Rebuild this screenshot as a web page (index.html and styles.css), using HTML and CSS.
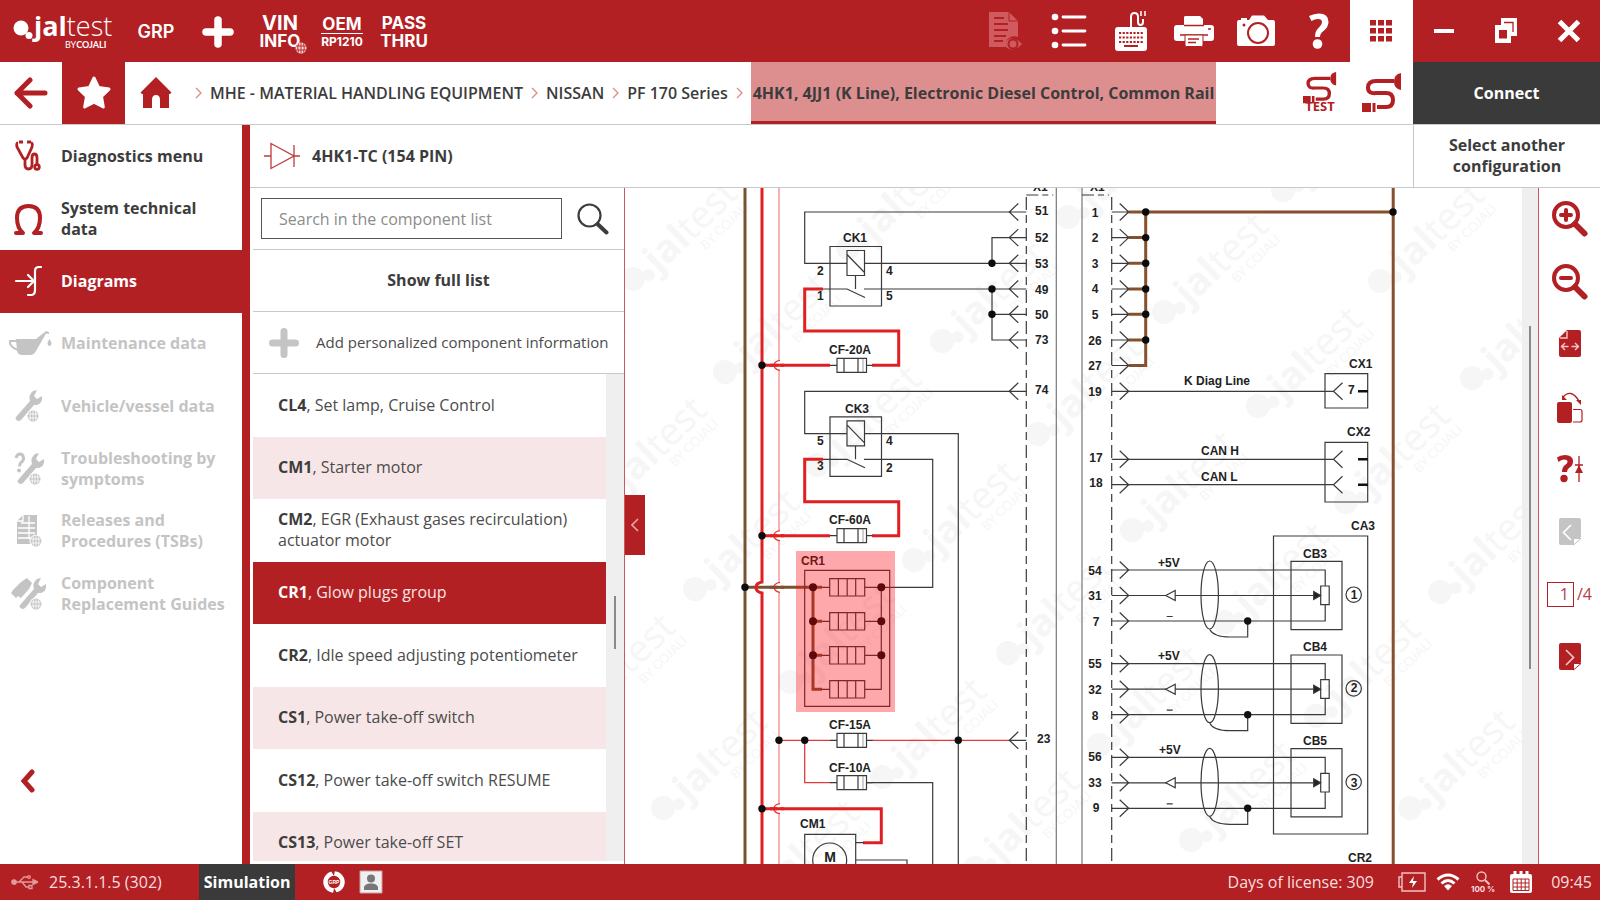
FILE: index.html
```html
<!DOCTYPE html>
<html lang="en">
<head>
<meta charset="utf-8">
<title>Jaltest - Diagrams</title>
<link rel="stylesheet" href="styles.css">
</head>
<body>
<div class="app">
  <header class="topbar">
    <svg class="logo" width="100" height="52" viewBox="12 4 100 52" role="img" aria-label="jaltest by Cojali">
      <circle cx="21" cy="27" r="7.5"/><circle cx="29" cy="34.500" r="3.500"/>
      <text x="34" y="35" class="logo-name"><tspan class="heavy">jal</tspan><tspan class="thin">test</tspan></text>
      <text x="65" y="47" class="logo-by">BY<tspan class="heavy">COJALI</tspan></text>
    </svg>
    <nav class="top-left">
      <button class="tb grp">GRP</button>
      <button class="tb" aria-label="Add"><svg width="32" height="32" viewBox="0 0 32 32"><path d="M16 4V28M4 16H28" stroke="#fff" stroke-width="7.500" stroke-linecap="round"/></svg></button>
      <button class="tb vin"><span>VIN</span><span class="small">INFO</span>
        <svg class="globe" width="12" height="12" viewBox="0 0 12 12"><circle cx="6" cy="6" r="5.500" fill="#f6d5d6"/><path d="M1 4h10M1 8h10M6 1v10M3.500 1.500q-1.500 4.500 0 9M8.500 1.500q1.500 4.500 0 9" stroke="#b22024" stroke-width=".9" fill="none"/></svg></button>
      <button class="tb oem"><span>OEM</span><span class="rp">RP1210</span></button>
      <button class="tb pass"><span>PASS</span><span>THRU</span></button>
    </nav>
    <nav class="top-right">
      <button class="tb dim" aria-label="View report"><svg width="36" height="42" viewBox="0 0 36 42"><path fill="#d05a5d" d="M1 2h20l9 9v16a9 8 0 0 0-12 10H1z"/><path d="M6 8h10M6 14h14M6 20h14M6 26h12M6 31h9" stroke="#b22024" stroke-width="1.800"/><path d="M21 2v9h9" stroke="#b22024" fill="none"/><path d="M15 34q9-11 19 0q-10 11-19 0z" fill="#d05a5d"/><circle cx="25" cy="34" r="4.500" fill="none" stroke="#b22024" stroke-width="2"/></svg></button>
      <button class="tb" aria-label="List"><svg width="36" height="36" viewBox="0 0 36 36"><g fill="#fff"><circle cx="4" cy="4" r="3.300"/><circle cx="4" cy="18" r="3.300"/><circle cx="4" cy="32" r="3.300"/></g><path d="M12 4h22M12 18h22M12 32h22" stroke="#fff" stroke-width="2.800" stroke-linecap="round"/></svg></button>
      <button class="tb" aria-label="Keyboard"><svg width="34" height="40" viewBox="0 0 34 40"><rect x="1" y="16" width="32" height="24" rx="3" fill="#fff"/><path d="M17 16V6q0-4 3.500-4T24 6v5q0 3 2.500 3t2.500-3V8" fill="none" stroke="#fff" stroke-width="2"/><path d="M27 0v5M31 0v5" stroke="#fff" stroke-width="1.500"/><path d="M5 22h24M5 26.500h24M5 31h24" stroke="#b22024" stroke-width="2" stroke-dasharray="2.200 1.400"/><path d="M10 35h14" stroke="#b22024" stroke-width="2"/></svg></button>
      <button class="tb" aria-label="Print"><svg width="42" height="32" viewBox="0 0 42 32"><path fill="#fff" d="M12 1h15l3 3v7H11V2z"/><rect x="1" y="10" width="40" height="16" rx="3" fill="#fff"/><path d="M11 10.500h20M7 20h28" stroke="#b22024" stroke-width="1.500"/><path fill="#fff" stroke="#b22024" d="M12 20h18v10q0 1.500-1.500 1.500h-15Q12 31.500 12 30z"/><path d="M15 24h11M15 27.500h8" stroke="#b22024" stroke-width="1.500"/><path d="M35 14h3" stroke="#b22024" stroke-width="1.500"/></svg></button>
      <button class="tb" aria-label="Camera"><svg width="40" height="32" viewBox="0 0 40 32"><path fill="#fff" d="M3 5h2V3h6v2h2l3-4.500h12L32 5h5q2 0 2 2v22q0 2-2 2H3q-2 0-2-2V7q0-2 2-2z"/><circle cx="22" cy="18" r="10" fill="none" stroke="#b22024" stroke-width="2"/><circle cx="8" cy="10" r="1.500" fill="#b22024"/></svg></button>
      <button class="tb" aria-label="Help"><svg width="24" height="38" viewBox="0 0 24 38"><path d="M2 4Q7 1.500 12 1.500q9.500 0 9.500 8.500 0 5-5 9-3.500 2.500-3.500 6H8q0-6 3.500-9Q15 12.500 15 10q0-3-4-3-3.500 0-6.500 2z" fill="#fff"/><circle cx="10.500" cy="32" r="4.800" fill="#fff"/></svg></button>
      <button class="tb active" aria-label="Applications"><svg width="22" height="22" viewBox="0 0 22 22" fill="#b22024"><path d="M0 0h6v5.500H0zM8 0h6v5.500H8zM16 0h6v5.500h-6zM0 8h6v5.500H0zM8 8h6v5.500H8zM16 8h6v5.500h-6zM0 16h6v5.500H0zM8 16h6v5.500H8zM16 16h6v5.500h-6z"/></svg></button>
      <button class="tb" aria-label="Minimize"><svg width="20" height="20" viewBox="0 0 20 20"><path d="M0 10h20" stroke="#fff" stroke-width="4"/></svg></button>
      <button class="tb" aria-label="Restore"><svg width="22" height="26" viewBox="0 0 22 26"><path d="M6 0h16v18H6z" fill="#fff"/><path d="M9 4.500h9V14" fill="none" stroke="#b22024" stroke-width="1.300"/><path d="M0 7h16v18H0z" fill="#fff"/><path d="M4 12h8v8.500H4z" fill="#b22024"/></svg></button>
      <button class="tb" aria-label="Close"><svg width="24" height="24" viewBox="0 0 24 24"><path d="M2.500 2.500l19 19M21.500 2.500l-19 19" stroke="#fff" stroke-width="5"/></svg></button>
    </nav>
  </header>

  <div class="navbar">
    <button class="nb" aria-label="Back"><svg width="34" height="32" viewBox="0 0 34 32"><path d="M16 3L3 16l13 13M3 16h28" fill="none" stroke="#b22024" stroke-width="5" stroke-linecap="round" stroke-linejoin="round"/></svg></button>
    <button class="nb star" aria-label="Favourites"><svg width="36" height="36" viewBox="0 0 36 36"><path d="M18 3l4.600 9.600 10.400 1.500-7.500 7.400 1.800 10.500-9.300-4.900L8.700 32l1.800-10.500L3 14.100l10.400-1.500z" fill="#fff" stroke="#fff" stroke-width="3" stroke-linejoin="round"/></svg></button>
    <button class="nb" aria-label="Home"><svg width="32" height="32" viewBox="0 0 32 32"><path d="M16 0l15.500 15.500-1.500 1.500h-1V31h-9v-8q0-5-4-5t-4 5v8H3V17H2L.5 15.500z" fill="#b22024"/></svg></button>
    <nav class="crumbs" aria-label="Breadcrumb">
      <svg class="sep" viewBox="0 0 7 12"><path d="M1 1l5 5-5 5"/></svg><a href="#mhe">MHE - MATERIAL HANDLING EQUIPMENT</a>
      <svg class="sep" viewBox="0 0 7 12"><path d="M1 1l5 5-5 5"/></svg><a href="#nissan">NISSAN</a>
      <svg class="sep" viewBox="0 0 7 12"><path d="M1 1l5 5-5 5"/></svg><a href="#pf170">PF 170 Series</a>
      <svg class="sep" viewBox="0 0 7 12"><path d="M1 1l5 5-5 5"/></svg><a href="#engine" class="current">4HK1, 4JJ1 (K Line), Electronic Diesel Control, Common Rail</a>
    </nav>
    <div class="nav-tools">
      <button class="nb test" aria-label="Cable test"><svg width="34" height="46" viewBox="0 -2 34 46"><use href="#cable" transform="scale(.85 .8)"/><text x="17" y="39" text-anchor="middle" class="test-label">TEST</text></svg></button>
      <button class="nb" aria-label="Cable"><svg width="40" height="40" viewBox="0 0 40 40">
        <defs><g id="cable"><path d="M32 8H14q-8 0-8 6.500T14 20h10q7 0 7 7t-7 7h-9" fill="none" stroke="#b22024" stroke-width="4"/><path d="M39 0v17q-7-1-7-8.500T39 0z" fill="#b22024"/><path d="M0 30h9v9H0zM10.500 30h3v9h-3z" fill="#b22024"/></g></defs><use href="#cable"/></svg></button>
    </div>
    <button class="connect">Connect</button>
  </div>

  <main class="main">
    <aside class="sidebar">
      <nav class="side-list">
        <a href="#diag" class="side"><svg class="si" viewBox="0 0 40 40"><g fill="none" stroke="#b22024" stroke-width="2.800"><path d="M10 7q-2 0-1 4l6 11q2 2 4 0l5-11q1-4-1-4M11 6h4M19 6h4"/><path d="M17 22v7q0 4 3.500 4t3.500-4v-7q0-4 2.500-4t2.500 4v7"/><circle cx="29" cy="31" r="2.300"/></g></svg><span>Diagnostics menu</span></a>
        <a href="#tech" class="side"><svg class="si" viewBox="0 0 40 40"><path d="M8 34h7q-6-5-6-15 0-12 11.500-12T32 19q0 10-6 15h7" fill="none" stroke="#b22024" stroke-width="4" stroke-linecap="round" stroke-linejoin="round"/></svg><span>System technical data</span></a>
        <a href="#diagrams" class="side on" aria-current="page"><svg class="si" viewBox="0 0 40 40"><path d="M8 20h18M20 14l6 6-6 6M33 6h-2q-4 0-4 4v19q0 5-4 5h-3" fill="none" stroke="#fff" stroke-width="2.200" stroke-linecap="round"/></svg><span>Diagrams</span></a>
        <a href="#maint" class="side off"><svg class="si wide" viewBox="0 0 44 40"><path d="M8 15h20l10-8 3 1v2l-3-.5L28 27q-2 4-6 4h-8q-4 0-5-4z" fill="#c4c4c4"/><path d="M9 17H2q-1 6 8 9" fill="none" stroke="#c4c4c4" stroke-width="2"/><path d="M41.500 15q4 6 0 7-4-1 0-7z" fill="#c4c4c4"/></svg><span>Maintenance data</span></a>
        <a href="#vehicle" class="side off"><svg class="si" viewBox="0 0 40 40"><use href="#wrench"/><use href="#net"/></svg><span>Vehicle/vessel data</span></a>
        <a href="#trouble" class="side off"><svg class="si" viewBox="0 0 40 40"><use href="#wrench" x="2"/><use href="#net" x="2"/><path d="M8 9q1-4 4-4t3.500 4q0 3-2.500 4.500-1.500 1-1.500 4" fill="none" stroke="#c4c4c4" stroke-width="3"/><circle cx="11" cy="21.500" r="1.900" fill="#c4c4c4"/></svg><span>Troubleshooting by symptoms</span></a>
        <a href="#releases" class="side off"><svg class="si" viewBox="0 0 40 40"><path d="M15 4h14v26q0 3-3 3H9V10z" fill="#c4c4c4"/><path d="M13 12h14M10 17h17M10 22h17M10 27h15M21 5v23M15 4v6H9" stroke="#fff" stroke-width="1.300" fill="none"/><use href="#net" x="3"/></svg><span>Releases and Procedures (TSBs)</span></a>
        <a href="#guides" class="side off"><svg class="si" viewBox="0 0 40 40"><use href="#wrench" x="4"/><use href="#net" x="3"/><path d="M13 8l6-4 5 5-3 6-8 9-3-2-2 2-5-5 2-3z" fill="#c4c4c4"/></svg><span>Component Replacement Guides</span></a>
      </nav>
      <button class="collapse" aria-label="Collapse menu"><svg width="16" height="24" viewBox="0 0 16 24"><path d="M12 3L4 12l8 9" fill="none" stroke="#b22024" stroke-width="5" stroke-linecap="round"/></svg></button>
    </aside>

    <section class="content">
      <div class="subbar">
        <svg width="36" height="28" viewBox="0 0 36 28" fill="none" stroke="#c0393c" stroke-width="1.300"><path d="M0 14h7M30 14h6M7 1.500v25L30 14zM30 3v22"/></svg>
        <h1>4HK1-TC (154 PIN)</h1>
        <button class="another">Select another configuration</button>
      </div>
      <div class="work">
        <div class="panel">
          <form class="search"><input type="text" placeholder="Search in the component list" aria-label="Search in the component list"><button type="button" aria-label="Search"><svg width="32" height="32" viewBox="0 0 32 32" fill="none" stroke="#3c3c3c"><circle cx="12.500" cy="12.500" r="11" stroke-width="2.200"/><path d="M20.500 21l9 8.500" stroke-width="4" stroke-linecap="round"/></svg></button></form>
          <button class="full">Show full list</button>
          <button class="add"><svg width="30" height="30" viewBox="0 0 30 30"><path d="M15 3.500v23M3.500 15h23" stroke="#c4c4c4" stroke-width="7" stroke-linecap="round"/></svg><span>Add personalized component information</span></button>
          <div class="list-wrap">
            <ul class="list">
              <li><span><b>CL4</b>, Set lamp, Cruise Control</span></li>
              <li><span><b>CM1</b>, Starter motor</span></li>
              <li><span><b>CM2</b>, EGR (Exhaust gases recirculation) actuator motor</span></li>
              <li class="sel"><span><b>CR1</b>, Glow plugs group</span></li>
              <li><span><b>CR2</b>, Idle speed adjusting potentiometer</span></li>
              <li><span><b>CS1</b>, Power take-off switch</span></li>
              <li><span><b>CS12</b>, Power take-off switch RESUME</span></li>
              <li><span><b>CS13</b>, Power take-off SET</span></li>
            </ul>
            <div class="track list-track"><i></i></div>
          </div>
        </div>
        <div class="canvas">
          <button class="handle" aria-label="Hide component list"><svg width="8" height="14" viewBox="0 0 8 14"><path d="M7 1L1 7l6 6" fill="none" stroke="#e8a5a7" stroke-width="1.600"/></svg></button>
          <svg class="diagram" width="897" height="676" viewBox="625 188 897 676">
            <defs>
              <g id="wrench"><path d="M8 31L22 15q-2-6 3-10l4-1-3 6 3 3 5-3q1 7-5 9l-3 0L13 34q-3 2-5-.5-1-1.500 0-2.500z" fill="#c4c4c4"/></g>
              <g id="net"><circle cx="25" cy="30" r="6.500" fill="#fff"/><circle cx="25" cy="30" r="5.500" fill="#c4c4c4"/><path d="M20 28h10M20 32h10M25 25v10M22.500 25.500q-1 4.500 0 9M27.500 25.500q1 4.500 0 9" stroke="#fff" stroke-width=".8" fill="none"/></g>
              <g id="wm" transform="rotate(-44)"><circle r="12"/><circle cx="14" cy="8" r="6"/><text x="22" y="14" class="wm-name"><tspan class="heavy">jal</tspan>test</text><text x="72" y="30" class="wm-by">BY COJALI</text></g>
              <g id="pinL"><path d="M0 0h17M9-8.500L0 0l9 8.500"/></g>
              <g id="pinR"><path d="M0 0h17M8-8.500L17 0l-9 8.500"/></g>
              <g id="relay"><path d="M0 0h51.500v59.500H0zM17 4h17.500v25H17zM17 8l17.500 18M25.500 29v13.500M-7 42.500H17l18 8.500"/></g>
              <g id="fuse"><path d="M-7 0h7M29.500 0h6"/><path d="M0-7h29.500V7H0zM7-7V7M21-7V7"/><path d="M26-7V7" opacity=".4"/></g>
              <g id="heater"><path d="M-8 0h8M35 0h17M0-8.700h35V8.700H0zM8.700-8.700V8.700M17.500-8.700V8.700M26-8.700V8.700"/></g>
              <g id="hop"><path d="M779-5v10" stroke="#fff" stroke-width="3"/><path d="M780-5q-6 1-6 5t6 5"/></g>
              <g id="sensor"><path d="M17 0h196.500v16M17 25.500h191M17 51h196.500V34.700M209 16h8.500v18.700H209zM179.300-8.700h51v68.300h-51z"/><path d="M202 21.500l7 4-7 4z" fill="#222"/><path d="M54 25.500l9.500-5v10z" fill="#fff"/><ellipse cx="98" cy="25" rx="8.700" ry="34"/><path d="M98 59.500q4 7.500 20 7.500h18V51M55 46.500h6"/><circle cx="242" cy="24.700" r="7.700"/><circle cx="136" cy="51" r="3.700" fill="#111" stroke="none"/><use href="#pinR"/><use href="#pinR" y="25.500"/><use href="#pinR" y="51"/></g>
            </defs>
            <g fill="#f6f6f6">
              <use href="#wm" transform="translate(633 279)"/><use href="#wm" transform="translate(848 248)"/><use href="#wm" transform="translate(1068 217)"/><use href="#wm" transform="translate(1283 190)"/>
              <use href="#wm" transform="translate(510 403)"/><use href="#wm" transform="translate(725 372)"/><use href="#wm" transform="translate(942 341)"/><use href="#wm" transform="translate(1164 312)"/><use href="#wm" transform="translate(1380 281)"/>
              <use href="#wm" transform="translate(602 496)"/><use href="#wm" transform="translate(817 465)"/><use href="#wm" transform="translate(1038 434)"/><use href="#wm" transform="translate(1258 406)"/><use href="#wm" transform="translate(1472 378)"/>
              <use href="#wm" transform="translate(695 589)"/><use href="#wm" transform="translate(914 560)"/><use href="#wm" transform="translate(1132 530)"/><use href="#wm" transform="translate(1346 502)"/>
              <use href="#wm" transform="translate(571 713)"/><use href="#wm" transform="translate(790 682)"/><use href="#wm" transform="translate(1008 653)"/><use href="#wm" transform="translate(1224 622)"/><use href="#wm" transform="translate(1440 592)"/>
              <use href="#wm" transform="translate(663 808)"/><use href="#wm" transform="translate(882 777)"/><use href="#wm" transform="translate(1099 745)"/><use href="#wm" transform="translate(1316 716)"/>
              <use href="#wm" transform="translate(755 899)"/><use href="#wm" transform="translate(975 868)"/><use href="#wm" transform="translate(1191 840)"/><use href="#wm" transform="translate(1410 808)"/>
            </g>
            <g class="brown">
              <path d="M745 188v676M745 587.300h77M813 587.300v102h9M813 621.300h9M813 655.300h9"/>
              <path class="br2" d="M1393.200 188v676M1128.500 212h264.700M1145.700 212v153.500h-17M1128.500 237.600h17M1128.500 263.300h17M1128.500 289h17M1128.500 314.300h17M1128.500 340h17"/>
            </g>
            <path class="pink" d="M779 188v676"/>
            <g class="red thinred"><path d="M779 740.300h51M872 740.300h138M804.700 740.300v42.400h26"/></g>
            <g class="red">
              <path d="M762 188v394q-6 1-6 5.500t6 5.500v271"/>
              <path d="M823 289h-18.300v42h94v34.300H872M762 365.300h68M823 459.300h-18.300v42.400h94v34H872M762 535.700h68M762 808.700h119.300v34H863"/>
            </g>
            <g class="red thinred"><use href="#hop" y="365.300"/><use href="#hop" y="535.700"/><use href="#hop" y="587.300"/><use href="#hop" y="808.700"/></g>
            <path class="red" d="M770 365.300h14M770 535.700h14M770 808.700h14"/>
            <path class="brown" d="M770 587.300h14"/>
            <g class="wire">
              <path d="M1056.300 188v676M1082 188v676" stroke="#777"/>
              <path d="M1026.300 197v667M1111.700 197v667" stroke-dasharray="13 5 8 5"/>
              <path d="M1026.300 195h27M1082 195h27" stroke-dasharray="12 4 6 4"/>
              <path d="M1010 212H804.700v51.300H847M864.500 263.300H1010M864 289h146M1010 237.600H992v25.700M992 289v51h18M992 314.300h18"/>
              <path d="M1010 391.300H804.700v42.300H847M864.500 433.600h93.800V864M864 459.300h68.700v128h-51.400M881.300 587.300v102M866 782.700h66.700V864M855.700 842.700h8M855.700 860H907v6"/>
              <path d="M804.700 570.300h85v136h-85zM804.700 834.300h51V870h-51z"/><circle cx="829.700" cy="860" r="17"/>
              <use href="#relay" x="830" y="246.500"/><use href="#relay" x="830" y="416.800"/>
              <use href="#fuse" x="837" y="365.300"/><use href="#fuse" x="837" y="535.700"/><use href="#fuse" x="837" y="740.300"/><use href="#fuse" x="837" y="782.700"/>
              <use href="#heater" x="829.700" y="587.300"/><use href="#heater" x="829.700" y="621.300"/><use href="#heater" x="829.700" y="655.300"/><use href="#heater" x="829.700" y="689.300"/>
              <use href="#pinL" x="1009.300" y="212"/><use href="#pinL" x="1009.300" y="237.600"/><use href="#pinL" x="1009.300" y="263.300"/><use href="#pinL" x="1009.300" y="289"/><use href="#pinL" x="1009.300" y="314.300"/><use href="#pinL" x="1009.300" y="340"/><use href="#pinL" x="1009.300" y="391.300"/><use href="#pinL" x="1009.300" y="740.300"/>
              <use href="#pinR" x="1111.700" y="212"/><use href="#pinR" x="1111.700" y="237.600"/><use href="#pinR" x="1111.700" y="263.300"/><use href="#pinR" x="1111.700" y="289"/><use href="#pinR" x="1111.700" y="314.300"/><use href="#pinR" x="1111.700" y="340"/><use href="#pinR" x="1111.700" y="365.500"/><use href="#pinR" x="1111.700" y="391.300"/><use href="#pinR" x="1111.700" y="459.300"/><use href="#pinR" x="1111.700" y="484.700"/>
              <path d="M1128.500 391.300h205M1128.500 459.300h205M1128.500 484.700h205M1325 373.700h42.700V408H1325zM1325 442.300h42.700V502H1325zM1342.500 382.800l-9 8.500 9 8.500M1342.500 450.800l-9 8.500 9 8.500M1342.500 476.200l-9 8.500 9 8.500"/>
              <path d="M1358 391.300h10M1358 459.300h10M1358 484.700h10" stroke="#111" stroke-width="2.500"/>
              <path d="M1273.500 536h94.200v298h-94.200z"/>
              <use href="#sensor" x="1111.700" y="570"/><use href="#sensor" x="1111.700" y="663.700"/><use href="#sensor" x="1111.700" y="757.300"/>
            </g>
            <g fill="#0c0c0c">
              <circle cx="762" cy="365.300" r="3.700"/><circle cx="762" cy="535.700" r="3.700"/><circle cx="745" cy="587.300" r="3.700"/><circle cx="762" cy="808.700" r="3.700"/><circle cx="779" cy="740.300" r="3.700"/><circle cx="804.700" cy="740.300" r="3.700"/><circle cx="958.300" cy="740.300" r="3.700"/>
              <circle cx="992" cy="263.300" r="3.700"/><circle cx="992" cy="289" r="3.700"/><circle cx="992" cy="314.300" r="3.700"/>
              <circle cx="813" cy="587.300" r="4"/><circle cx="813" cy="621.300" r="4"/><circle cx="813" cy="655.300" r="4"/><circle cx="881.300" cy="587.300" r="4"/><circle cx="881.300" cy="621.300" r="4"/><circle cx="881.300" cy="655.300" r="4"/>
              <circle cx="1145.700" cy="212" r="3.700"/><circle cx="1145.700" cy="237.600" r="3.700"/><circle cx="1145.700" cy="263.300" r="3.700"/><circle cx="1145.700" cy="289" r="3.700"/><circle cx="1145.700" cy="314.300" r="3.700"/><circle cx="1145.700" cy="340" r="3.700"/><circle cx="1393" cy="212" r="3.700"/>
            </g>
            <g class="lbl">
              <text x="1033" y="191">X1</text><text x="1090" y="191">X1</text>
              <text x="843" y="242">CK1</text><text x="845" y="413">CK3</text><text x="829" y="354">CF-20A</text><text x="829" y="524">CF-60A</text><text x="829" y="729">CF-15A</text><text x="829" y="772">CF-10A</text><text x="801" y="565">CR1</text><text x="800" y="828">CM1</text>
              <text x="817" y="275">2</text><text x="817" y="300">1</text><text x="886" y="275">4</text><text x="886" y="300">5</text><text x="817" y="445">5</text><text x="817" y="470">3</text><text x="886" y="445">4</text><text x="886" y="472">2</text>
              <text x="1035" y="215">51</text><text x="1035" y="242">52</text><text x="1035" y="268">53</text><text x="1035" y="294">49</text><text x="1035" y="319">50</text><text x="1035" y="344">73</text><text x="1035" y="394">74</text><text x="1037" y="743">23</text>
              <text x="1349" y="368">CX1</text><text x="1347" y="436">CX2</text><text x="1351" y="530">CA3</text><text x="1303" y="558">CB3</text><text x="1303" y="651">CB4</text><text x="1303" y="745">CB5</text><text x="1348" y="862">CR2</text>
              <text x="1184" y="385">K Diag Line</text><text x="1201" y="455">CAN H</text><text x="1201" y="481">CAN L</text><text x="1348" y="394">7</text>
              <text x="1158" y="567">+5V</text><text x="1158" y="660">+5V</text><text x="1159" y="754">+5V</text>
              <g text-anchor="middle"><text x="1095" y="217">1</text><text x="1095" y="242">2</text><text x="1095" y="268">3</text><text x="1095" y="293">4</text><text x="1095" y="319">5</text><text x="1095" y="345">26</text><text x="1095" y="370">27</text><text x="1095" y="396">19</text><text x="1096" y="462">17</text><text x="1096" y="487">18</text>
              <text x="1095" y="575">54</text><text x="1095" y="600">31</text><text x="1096" y="626">7</text><text x="1095" y="668">55</text><text x="1095" y="694">32</text><text x="1095" y="720">8</text><text x="1095" y="761">56</text><text x="1095" y="787">33</text><text x="1096" y="812">9</text>
              <text x="1354" y="599">1</text><text x="1354" y="692">2</text><text x="1354" y="787">3</text><text x="830" y="862" class="motor">M</text></g>
            </g>
            <rect x="796" y="551" width="99" height="161" fill="#ff060e" fill-opacity=".35"/>
          </svg>
        </div>
        <div class="track canvas-track"><i></i></div>
        <div class="tools">
          <button aria-label="Zoom in"><svg width="38" height="38" viewBox="0 0 38 38"><use href="#lens"/><path d="M10 15h10M15 10v10" stroke="#b22024" stroke-width="4" stroke-linecap="round"/></svg></button>
          <button aria-label="Zoom out"><svg width="38" height="38" viewBox="0 0 38 38"><defs><g id="lens" fill="none" stroke="#b22024"><circle cx="15" cy="15" r="12" stroke-width="4"/><path d="M24 24l9.500 9.500" stroke-width="6" stroke-linecap="round"/></g></defs><use href="#lens"/><path d="M10 15h10" stroke="#b22024" stroke-width="4" stroke-linecap="round"/></svg></button>
          <button aria-label="Fit width"><svg width="22" height="28" viewBox="0 0 22 28"><path d="M8 0h12q2 0 2 2v23q0 2-2 2H2q-2 0-2-2V8z" fill="#b22024"/><path d="M8 1v7H1M2.500 16.500h7M12.500 16.500h7M6 13l-3.500 3.500L6 20M16 13l3.500 3.500L16 20" stroke="#f3c5c6" stroke-width="1.400" fill="none"/></svg></button>
          <button aria-label="Rotate"><svg width="26" height="32" viewBox="0 0 26 32"><rect x="0" y="11" width="15" height="21" rx="2" fill="#b22024"/><path d="M16 18.500h7q2 0 2 2V29q0 2-2 2h-7" fill="none" stroke="#b22024" stroke-width="1.200"/><path d="M6 6q8-9 16 4" fill="none" stroke="#b22024" stroke-width="1.300"/><path d="M5 4v5h5zM19 9h5v5z" fill="#b22024"/></svg></button>
          <button aria-label="Component help"><svg width="26" height="28" viewBox="0 0 26 28"><path d="M0 2.500Q3 0 8 0q8 0 8 6.500 0 4-4 6.500-2 1.500-2 4H5q0-5 3-7 2.500-1.500 2.500-3.200Q10.500 4.500 7 4.500 4 4.500 1.500 7z" fill="#b22024"/><circle cx="7" cy="23.500" r="3.700" fill="#b22024"/><path d="M22 1v26M18 10h8" stroke="#b22024" stroke-width="1.300"/><path d="M22 10l4 8h-8z" fill="#b22024"/></svg></button>
          <button aria-label="Previous page" disabled><svg width="22" height="28" viewBox="0 0 22 28"><path d="M2 0h18q2 0 2 2v17l-8 8H2q-2 0-2-2V2q0-2 2-2z" fill="#c4c4c4"/><path d="M12 7l-7.500 7.500L12 22" stroke="#fff" stroke-width="1.700" fill="none"/><path d="M14.500 27v-6.500H22z" fill="#fff" stroke="#c4c4c4"/></svg></button>
          <div class="page"><input type="text" value="1" aria-label="Page"><span>/4</span></div>
          <button aria-label="Next page"><svg width="22" height="28" viewBox="0 0 22 28"><path d="M2 0h18q2 0 2 2v17l-8 8H2q-2 0-2-2V2q0-2 2-2z" fill="#b22024"/><path d="M7 7l7.500 7.500L7 22" stroke="#f3c5c6" stroke-width="1.700" fill="none"/><path d="M14.500 27v-6.500H22z" fill="#fff" stroke="#b22024"/></svg></button>
        </div>
      </div>
    </section>
  </main>

  <footer class="status">
    <svg width="27" height="16" viewBox="0 0 27 16" fill="none" stroke="#e39a9c" stroke-width="1.300"><circle cx="3" cy="8" r="2.200" fill="#e39a9c"/><path d="M3 8h20M8 8l5-5h4M11 8l4 5h3"/><path d="M22 5.500l5 2.500-5 2.500z" fill="#e39a9c"/><circle cx="18" cy="3" r="1.300"/><path d="M18 11.500h3v3h-3z"/></svg>
    <span class="version">25.3.1.1.5 (302)</span>
    <span class="sim">Simulation</span>
    <svg width="22" height="24" viewBox="0 0 22 24"><circle cx="11" cy="12" r="8.500" fill="none" stroke="#fff" stroke-width="4.500"/><path d="M8 1l4-1-1 6zM14 23l-4 1 1-6z" fill="#b22024"/><text x="11" y="14" text-anchor="middle" class="gp">GRP</text></svg>
    <svg class="user" width="24" height="24" viewBox="0 0 24 24"><path d="M1 1h22v22H1z" fill="#f0f0f0" stroke="#c9a0a0"/><circle cx="12" cy="8.500" r="4" fill="#777"/><path d="M5 20v-3q1-3 5-3.500h4q4 .5 5 3.500v3z" fill="#777"/></svg>
    <span class="days">Days of license: 309</span>
    <svg class="bat" width="28" height="20" viewBox="0 0 28 20"><path d="M4 1h23v18H4zM1 5h3v10H1z" fill="none" stroke="#f3c0c1" stroke-width="1.400"/><path d="M16 4l-5 7h4l-1 5 5-7h-4z" fill="#fff"/></svg>
    <svg class="wifi" width="24" height="18" viewBox="0 0 24 18" fill="none" stroke="#fff" stroke-width="3"><path d="M1.500 6.500q10.500-9 21 0M5.500 10.500q6.500-6 13 0"/><path d="M12 17.500l-4-4.500q4-3.500 8 0z" fill="#fff" stroke="none"/></svg>
    <span class="zoom"><svg width="14" height="14" viewBox="0 0 14 14" fill="none" stroke="#f3c0c1"><circle cx="5.500" cy="5.500" r="4.500" stroke-width="1.400"/><path d="M9 9l4.500 4.500" stroke-width="2"/></svg><span>100 %</span></span>
    <svg class="cal" width="24" height="24" viewBox="0 0 24 24"><rect x="1" y="4" width="22" height="19" rx="2" fill="#fff"/><path d="M6 1v6M12 1v6M18 1v6" stroke="#fff" stroke-width="3"/><path d="M4 9h16M4 13h16M4 17h16M4 20.500h16M8.200 9v11.500M12.200 9v11.500M16.200 9v11.500M4 9v11.500M20 9v11.500" stroke="#b22024"/></svg>
    <span class="clock">09:45</span>
  </footer>
</div>
</body>
</html>
```

FILE: styles.css
```css
* { box-sizing: border-box; }
html, body { height: 100%; margin: 0; }
body { font-family: "Open Sans", "Noto Sans", sans-serif; font-size: 16px; line-height: 21px; color: #3c3c3c; background: #fff; }
button { font: inherit; color: inherit; background: none; border: 0; padding: 0; cursor: pointer; }
a { color: inherit; text-decoration: none; }
svg { display: block; flex: none; }

.app { height: 100vh; display: grid; grid-template-columns: minmax(0, 1fr); grid-template-rows: 62px 63px minmax(0, 1fr) 36px; }

/* top bar */
.topbar { background: #b22024; color: #fff; display: flex; align-items: center; }
.logo { margin-left: 12px; fill: #fff; }
.logo-name { font: 400 27px "Open Sans", sans-serif; }
.logo-by { font: 400 9px Lato, sans-serif; }
.heavy { font-weight: 700; }
.thin { font-weight: 300; }
.top-left { display: flex; align-self: stretch; margin-left: 13px; }
.tb { min-width: 0; height: 100%; display: flex; align-items: center; justify-content: center; }
.top-left .tb { width: 62px; padding-top: 2px; position: relative; flex-direction: column; font: 700 17px/18px Inter, sans-serif; }
.top-left .grp { font-weight: 600; font-size: 18px; }
.top-left .vin { font-size: 20px; line-height: 18px; }
.vin .small { font-size: 17px; }
.globe { position: absolute; right: 4px; bottom: 8px; }
.oem .rp { font-size: 12px; line-height: 15px; border-top: 1px solid #fff; }
.top-right { margin-left: auto; width: 625px; height: 100%; display: grid; grid-template-columns: repeat(10, 1fr); }
.tb.active { background: #fff; }

/* breadcrumb bar */
.navbar { display: flex; border-bottom: 1px solid #c8c8c8; font-weight: 600; }
.nb { width: 62px; display: flex; align-items: center; justify-content: center; }
.nb.star { background: #b22024; width: 63px; }
.crumbs { flex: 1; min-width: 0; display: flex; align-items: center; white-space: nowrap; }
.sep { width: 7px; height: 12px; margin: 0 8px; fill: none; stroke: #dc8a8c; stroke-width: 1.3; }
.crumbs .current { align-self: stretch; display: flex; align-items: center; padding: 0 2px; background: #dd8f90; border-bottom: 3px solid #b22024; border-top: 3px solid #dd8f90; font-weight: 700; }
.nav-tools { display: flex; }
.test-label { font: 700 13px "Open Sans", sans-serif; fill: #b22024; }
.connect { width: 187px; height: 62px; background: #3a3a3a; color: #fff; font-weight: 700; }

/* side menu */
.main { display: grid; grid-template-columns: 250px minmax(0, 1fr); min-height: 0; }
.sidebar { border-right: 8px solid #b22024; display: flex; flex-direction: column; justify-content: space-between; }
.side-list { height: 500px; display: grid; grid-template-rows: repeat(8, 1fr); }
.side { display: flex; align-items: center; padding-right: 12px; font-weight: 700; }
.si { width: 40px; height: 40px; margin: 0 13px 0 8px; }
.si.wide { width: 44px; margin-right: 9px; }
.side.on { background: #b22024; color: #fff; }
.side.off { color: #c4c4c4; }
.collapse { width: 56px; display: flex; justify-content: center; margin-bottom: 71px; }

/* content */
.content { display: grid; grid-template-rows: 63px minmax(0, 1fr); min-width: 0; min-height: 0; }
.subbar { display: flex; align-items: center; border-bottom: 1px solid #c8c8c8; padding-left: 14px; }
.subbar h1 { margin: 0 0 0 12px; font-size: 16px; font-weight: 700; line-height: 21px; }
.another { margin-left: auto; width: 187px; height: 100%; padding: 0 24px; border-left: 1px solid #c8c8c8; font-weight: 700; }
.work { display: grid; grid-template-columns: 375px minmax(0, 1fr) 16px 62px; min-height: 0; }

/* component list */
.panel { display: flex; flex-direction: column; min-height: 0; padding-left: 3px; border-right: 1px solid #c85a5d; }
.search, .full, .add { height: 62px; flex: none; border-bottom: 1px solid #c8c8c8; display: flex; align-items: center; }
.search { padding: 0 15px 0 8px; justify-content: space-between; }
.search input { width: 301px; height: 41px; border: 1px solid #555; padding: 0 17px; font: inherit; color: #3c3c3c; }
.search input::placeholder { color: #8c8c8c; opacity: 1; }
.full { justify-content: center; font-weight: 700; }
.add { padding-left: 16px; gap: 17px; white-space: nowrap; font-size: 15px; color: #4c4c4c; }
.list-wrap { flex: 1; min-height: 0; display: flex; margin-bottom: 3px; overflow: hidden; }
.list { flex: 1; height: 500px; margin: 0; padding: 0; list-style: none; display: grid; grid-template-rows: repeat(8, 1fr); color: #4c4c4c; }
.list li { display: flex; align-items: center; padding: 0 20px 0 25px; }
.list li:nth-child(even) { background: #f7e6e7; }
.list li b { font-weight: 700; color: #3c3c3c; }
.list li.sel { background: #b22024; color: #fbe3e3; }
.list li.sel b { color: #fff; }
.track { background: #efefef; display: flex; justify-content: center; }
.track i { width: 2px; background: #8a8a8a; }
.list-track { width: 18px; }
.list-track i { margin-top: 222px; height: 53px; }
.canvas-track i { margin-top: 138px; height: 343px; }

/* wiring diagram */
.canvas { position: relative; overflow: hidden; background: #fff; }
.handle { position: absolute; left: 0; top: 307px; width: 20px; height: 60px; background: #b22024; display: flex; align-items: center; justify-content: center; }
.wire { fill: none; stroke: #3a3a3a; stroke-width: 1.2; }
.red { fill: none; stroke: #e01f22; stroke-width: 3; }
.thinred { stroke-width: 1.3; stroke: #e23a3c; }
.pink { fill: none; stroke: #f2898a; stroke-width: 1.3; }
.brown { fill: none; stroke: #7b5230; stroke-width: 3; }
.br2 { stroke: #86502c; }
.lbl { font: 700 12px "Liberation Sans", Arial, sans-serif; fill: #222; }
.motor { font-size: 14px; }
.wm-name { font: 400 38px "Open Sans", sans-serif; }
.wm-name .heavy { font-weight: 700; }
.wm-by { font: 400 13px Lato, sans-serif; }

/* diagram tools */
.tools { border-left: 1px solid #c85a5d; display: grid; grid-template-rows: repeat(8, 1fr); padding-bottom: 176px; justify-items: center; align-items: center; }
.tools button { display: flex; }
.page { display: flex; align-items: center; gap: 3px; color: #b04043; }
.page input { width: 27px; height: 25px; border: 1px solid #b22024; padding: 0 4px; text-align: right; font: inherit; color: #b04043; }

/* status bar */
.status { background: #b22024; color: #f9dede; display: flex; align-items: center; padding: 0 8px 0 11px; }
.version { margin-left: 11px; }
.sim { align-self: stretch; display: flex; align-items: center; margin: 0 28px 0 37px; padding: 0 5px; background: #3a3a3a; color: #fff; font-weight: 700; }
.gp { font: 700 5px "Liberation Sans", sans-serif; fill: #fff; }
.user { margin-left: 14px; }
.days { margin-left: auto; }
.bat { margin-left: 24px; }
.wifi { margin-left: 10px; }
.zoom { margin-left: 11px; display: flex; flex-direction: column; align-items: center; font: 700 8px/9px Inter, sans-serif; }
.cal { margin-left: 14px; }
.clock { margin-left: 18px; }
```
